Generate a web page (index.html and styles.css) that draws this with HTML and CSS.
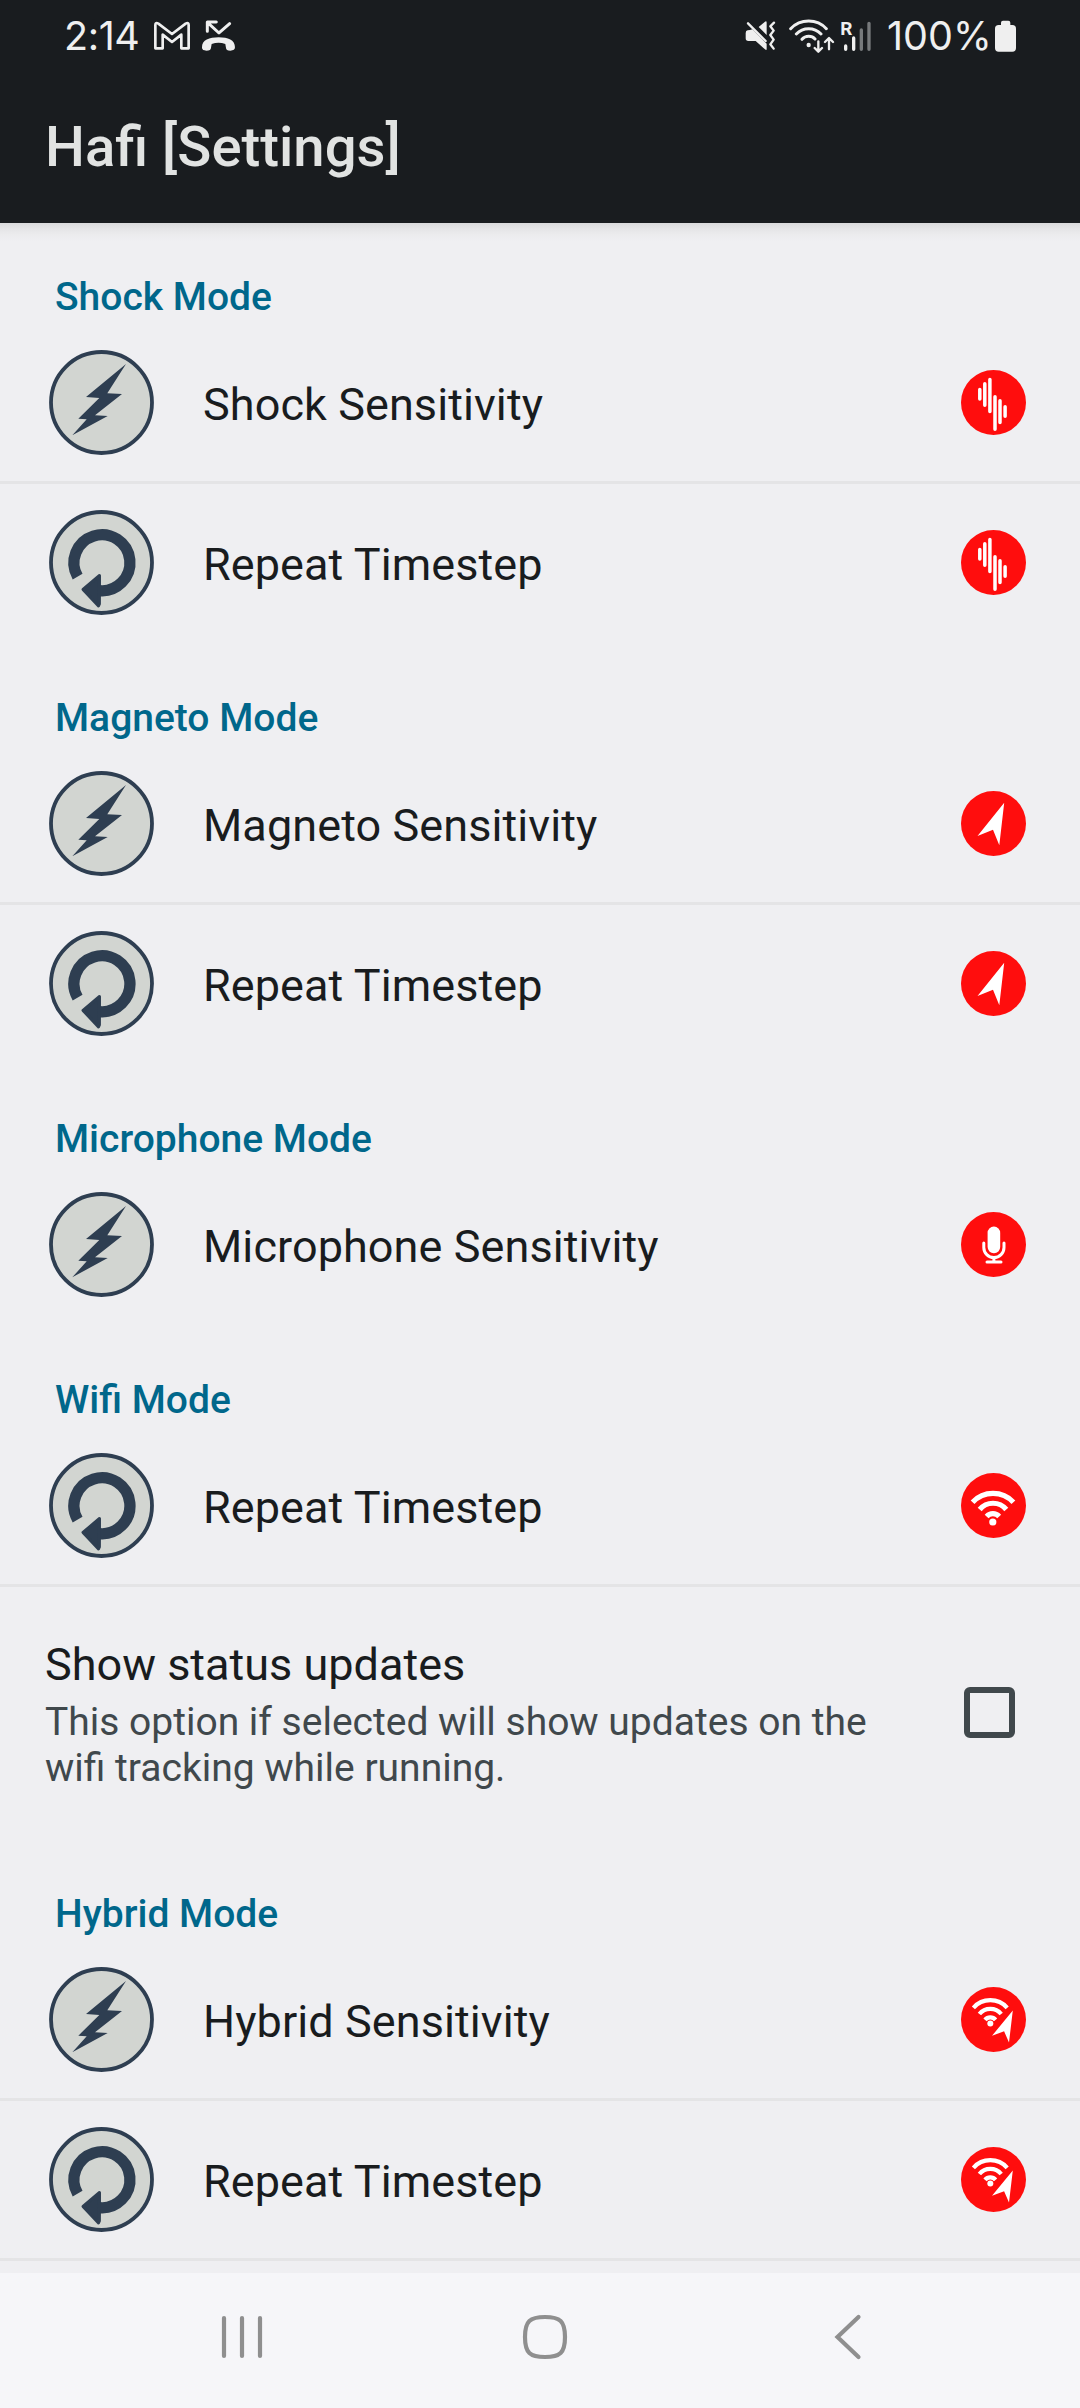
FILE: index.html
```html
<!DOCTYPE html>
<html lang="en">
<head>
<meta charset="utf-8">
<title>Hafi [Settings]</title>
<link rel="stylesheet" href="styles.css">
</head>
<body>
<svg class="defs" aria-hidden="true">
  <symbol id="bolt" viewBox="0 0 105 105">
    <circle cx="52.5" cy="52.5" r="50.5" fill="#d2d5d1" stroke="#2e3e51" stroke-width="3.8"/>
    <path fill="#2e3e51" d="M77 14 58.3 43.3 73 44 46 65.3 58.7 66 23.3 85.3 37.7 69.3 29.3 68.7 50.3 48 37 47Z"/>
  </symbol>
  <symbol id="repeat" viewBox="0 0 105 105">
    <circle cx="52.5" cy="52.5" r="50.5" fill="#d2d5d1" stroke="#2e3e51" stroke-width="3.8"/>
    <path fill="none" stroke="#2e3e51" stroke-width="11.3" d="M28.6 66.6A28 28 0 1 1 50 80.6"/>
    <path fill="#2e3e51" stroke="#2e3e51" stroke-width="3" stroke-linejoin="round" d="M50.5 65.5 34 79.4 49.5 96 50.4 94Z"/>
  </symbol>
  <symbol id="shock" viewBox="0 0 65 65">
    <circle cx="32.5" cy="32.5" r="32.5" fill="#ff0d0d"/>
    <path fill="none" stroke="#fff" stroke-width="3.5" stroke-linecap="round" d="M18.8 19.4V29M23.8 13.7V35.3M28.9 9.4V41.6M34 26.7V59.3M39 30.7V52.6M44.1 36.7V46.3"/>
  </symbol>
  <symbol id="magneto" viewBox="0 0 65 65">
    <circle cx="32.5" cy="32.5" r="32.5" fill="#ff0d0d"/>
    <path fill="#fff" d="M43.2 11.8 38.3 54.2 32 38.8 16.5 45Z"/>
  </symbol>
  <symbol id="mic" viewBox="0 0 65 65">
    <circle cx="32.5" cy="32.5" r="32.5" fill="#ff0d0d"/>
    <rect x="26.6" y="14.6" width="12.6" height="26.6" rx="6.2" fill="#fff"/>
    <path fill="none" stroke="#fff" stroke-width="3" stroke-linecap="round" d="M22.8 31V35.5A10.1 10.1 0 0 0 43 35.5V31M32.9 45.6V50M26 50H40"/>
  </symbol>
  <symbol id="wifi" viewBox="0 0 65 65">
    <circle cx="32.5" cy="32.5" r="32.5" fill="#ff0d0d"/>
    <path fill="none" stroke="#fff" stroke-width="5.2" d="M11.6 29.2A28 28 0 0 1 52.4 29.2M18.7 36.5A17.3 17.3 0 0 1 45.3 36.5M25.6 43.4A8.6 8.6 0 0 1 38.2 43.4"/>
    <circle cx="31.8" cy="49" r="3.6" fill="#fff"/>
  </symbol>
  <symbol id="hybrid" viewBox="0 0 65 65">
    <circle cx="32.5" cy="32.5" r="32.5" fill="#ff0d0d"/>
    <path fill="none" stroke="#fff" stroke-width="4.2" d="M12.4 20.8A22.6 22.6 0 0 1 46.2 20.8M18.4 27A14 14 0 0 1 40.2 27M24 32.8A6.9 6.9 0 0 1 34.6 32.8"/>
    <circle cx="29.3" cy="36.4" r="3" fill="#fff"/>
    <path fill="#fff" d="M51.8 23.5 48 55.5 43.1 44.3 31 48.8Z"/>
  </symbol>
</svg>

<header class="header">
  <div class="status">
    <span class="clock">2:14</span>
    <svg class="gmail" viewBox="461 64 108 88"><path fill="none" stroke="#efefef" stroke-width="8" stroke-linejoin="round" d="M465 146V76Q465 67 474 72L515 103 556 72Q565 67 565 76V146H543V105L515 127 487 105V146Z"/></svg>
    <svg class="missed" viewBox="606 62 100 94"><path fill="none" stroke="#efefef" stroke-width="9" stroke-linejoin="round" stroke-linecap="round" d="M689 73 657 101 623 70M649 68H622V96"/><path fill="#efefef" d="M606 144C606 122 628 114 656 114S705 122 705 144Q705 154 691 154Q678 154 678 145L676 134Q656 126 635 134L633 145Q633 154 619 154T606 144Z"/></svg>
    <svg class="mute" viewBox="76 64 93 94"><path fill="#efefef" d="M84 95Q91 95 98 92L141 135V151Q141 156 136 152L108 127H86Q78 127 78 119V103Q78 95 84 95ZM117 85 136 69Q141 66 141 72V109Z"/><path fill="none" stroke="#efefef" stroke-width="7" stroke-linecap="round" stroke-linejoin="round" d="M85 74 138 127M163 72 152 83 162 96 152 109 162 123 152 137 162 150"/></svg>
    <svg class="net" viewBox="208 58 138 104"><g fill="none" stroke="#efefef" stroke-linecap="round" stroke-linejoin="round"><path stroke-width="9" d="M213 87Q235 64 267 64T320 87M230 103Q245 87 267 87T304 103M247 119Q255 110 267 110T286 118"/><path stroke-width="7" d="M296 125V155M285 145 296 156 307 145M328 149V117M316 127 328 115 340 127"/></g><circle cx="267" cy="136" r="6.5" fill="#efefef"/></svg>
    <svg class="signal" viewBox="360 58 96 100"><text x="361" y="105" class="roam">R</text><g stroke-width="10" stroke-linecap="round"><path stroke="#efefef" d="M377 139V149M401 115V149"/><path stroke="#777a7c" d="M424 91V149M447 71V149"/></g></svg>
    <span class="percent">100%</span>
    <svg class="battery" viewBox="825 60 63 96"><path fill="#efefef" d="M843 75V68Q843 62 849 62H865Q871 62 871 68V75H877Q888 75 888 86V144Q888 155 877 155H836Q825 155 825 144V86Q825 75 836 75Z"/></svg>
  </div>
  <h1 class="title">Hafi [Settings]</h1>
</header>

<main class="list">
  <section class="group">
    <h2 class="category">Shock Mode</h2>
    <div class="row"><svg class="lead"><use href="#bolt"/></svg><span class="label">Shock Sensitivity</span><svg class="badge"><use href="#shock"/></svg></div>
    <div class="row"><svg class="lead"><use href="#repeat"/></svg><span class="label">Repeat Timestep</span><svg class="badge"><use href="#shock"/></svg></div>
  </section>
  <section class="group">
    <h2 class="category">Magneto Mode</h2>
    <div class="row"><svg class="lead"><use href="#bolt"/></svg><span class="label">Magneto Sensitivity</span><svg class="badge"><use href="#magneto"/></svg></div>
    <div class="row"><svg class="lead"><use href="#repeat"/></svg><span class="label">Repeat Timestep</span><svg class="badge"><use href="#magneto"/></svg></div>
  </section>
  <section class="group">
    <h2 class="category">Microphone Mode</h2>
    <div class="row"><svg class="lead"><use href="#bolt"/></svg><span class="label">Microphone Sensitivity</span><svg class="badge"><use href="#mic"/></svg></div>
  </section>
  <section class="group">
    <h2 class="category">Wifi Mode</h2>
    <div class="row"><svg class="lead"><use href="#repeat"/></svg><span class="label">Repeat Timestep</span><svg class="badge"><use href="#wifi"/></svg></div>
    <div class="row row-check">
      <div class="text"><div class="label">Show status updates</div><p class="summary">This option if selected will show updates on the wifi tracking while running.</p></div>
      <span class="checkbox" role="checkbox" aria-checked="false"></span>
    </div>
  </section>
  <section class="group group-last">
    <h2 class="category">Hybrid Mode</h2>
    <div class="row"><svg class="lead"><use href="#bolt"/></svg><span class="label">Hybrid Sensitivity</span><svg class="badge"><use href="#hybrid"/></svg></div>
    <div class="row"><svg class="lead"><use href="#repeat"/></svg><span class="label">Repeat Timestep</span><svg class="badge"><use href="#hybrid"/></svg></div>
  </section>
</main>

<nav class="navbar">
  <svg viewBox="0 0 48 48"><path d="M6 5V43M24 5V43M42 5V43"/></svg>
  <svg viewBox="0 0 48 48"><path d="M24 4C39 4 44 8 44 24S39 44 24 44 4 40 4 24 9 4 24 4Z"/></svg>
  <svg viewBox="0 0 48 48"><path d="M34.5 4 13.5 24 34.5 44"/></svg>
</nav>
</body>
</html>
```
FILE: styles.css
```css
* { box-sizing: border-box; }

body {
  margin: 0;
  width: 1080px;
  height: 2408px;
  display: flex;
  flex-direction: column;
  overflow: hidden;
  background: #efeff2;
  color: #191c1e;
  font-family: Roboto, "Liberation Sans", sans-serif;
}

svg { display: block; flex: none; }
.defs { width: 0; height: 0; position: absolute; }

.header {
  height: 223px;
  flex: none;
  background: #191c1f;
  color: #e1e3e2;
}

.status {
  height: 72px;
  display: flex;
  align-items: center;
  padding: 0 64px 0 64px;
  color: #efefef;
  font-family: Inter, Roboto, sans-serif;
  font-size: 39.5px;
}
.clock { width: 90px; letter-spacing: -0.4px; }
.gmail { width: 36px; height: 29.3px; }
.missed { width: 33.3px; height: 31.3px; margin-left: 12px; }
.mute { width: 31px; height: 31.3px; margin-left: auto; }
.net { width: 46px; height: 34.7px; margin-left: 13px; }
.signal { width: 32px; height: 33.3px; margin-left: 5px; overflow: visible; }
.roam { font: 700 57px Roboto, sans-serif; fill: #efefef; }
.percent { width: 105px; margin-left: 15px; letter-spacing: 0; white-space: nowrap; }
.battery { width: 21px; height: 32px; margin-left: 3px; }

.title {
  margin: 0;
  padding: 42px 0 0 45px;
  font-size: 56.25px;
  line-height: 66px;
  font-weight: 500;
}

.list {
  flex: 1;
  min-height: 0;
  background: linear-gradient(#dadadc, #e5e5e7 6px, #ececee 12px, #efeff2 18px);
}

.category {
  margin: 0;
  height: 104px;
  padding: 54px 0 0 55px;
  color: #00678b;
  font-size: 39px;
  line-height: 46px;
  font-weight: 500;
}
.group:first-child .category { height: 101px; padding-top: 51px; }

.row {
  height: 157px;
  display: flex;
  align-items: center;
  padding: 0 54px 0 49px;
}
.row + .row { height: 160px; border-top: 3px solid #e4e4e6; }
.group-last { border-bottom: 3px solid #e4e4e6; }

.lead { width: 105px; height: 105px; margin-right: 49px; }
.badge { width: 65px; height: 65px; margin-left: auto; }
.label { font-size: 45px; line-height: 53px; padding-top: 3px; }
.row > .label { letter-spacing: 0.08px; }

.row + .row-check { height: 253px; padding: 0 65px 0 45px; }
.text { width: 860px; padding-top: 2px; }
.summary {
  margin: 8px 0 0;
  color: #40484c;
  font-size: 39px;
  line-height: 46px;
}
.checkbox {
  width: 51px;
  height: 51px;
  margin-left: auto;
  border: 6px solid #40484c;
  border-radius: 6px;
}

.navbar {
  height: 135px;
  flex: none;
  display: grid;
  grid-template-columns: repeat(3, 1fr);
  align-items: center;
  justify-items: center;
  padding: 0 81px 7px 91px;
  background: #f6f6f9;
}
.navbar svg {
  width: 48px;
  height: 48px;
  fill: none;
  stroke: #8f8f8f;
  stroke-width: 4.2;
  stroke-linecap: round;
}
```
